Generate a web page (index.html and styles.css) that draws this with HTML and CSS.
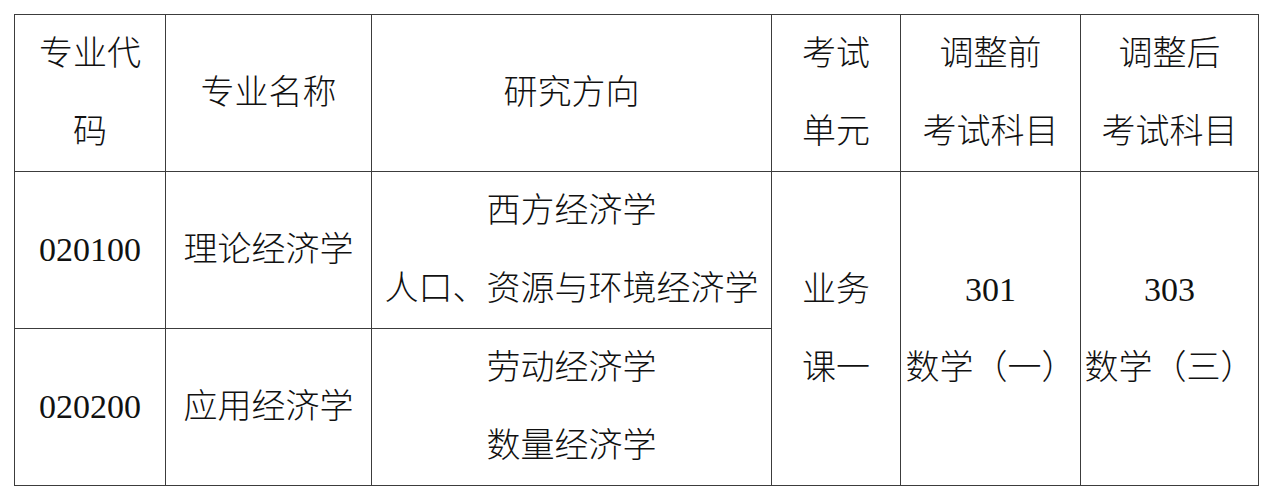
FILE: index.html
```html
<!DOCTYPE html>
<html lang="zh-CN">
<head>
<meta charset="utf-8">
<link rel="stylesheet" href="styles.css">
</head>
<body>
<table class="grid">
  <colgroup>
    <col class="c1"><col class="c2"><col class="c3"><col class="c4"><col class="c5"><col class="c6">
  </colgroup>
  <tr>
    <td>专业代<br>码</td>
    <td>专业名称</td>
    <td>研究方向</td>
    <td>考试<br>单元</td>
    <td>调整前<br>考试科目</td>
    <td>调整后<br>考试科目</td>
  </tr>
  <tr>
    <td>020100</td>
    <td>理论经济学</td>
    <td>西方经济学<br>人口、资源与环境经济学</td>
    <td rowspan="2">业务<br>课一</td>
    <td rowspan="2">301<br>数学（一）</td>
    <td rowspan="2">303<br>数学（三）</td>
  </tr>
  <tr>
    <td>020200</td>
    <td>应用经济学</td>
    <td>劳动经济学<br>数量经济学</td>
  </tr>
</table>
</body>
</html>
```
FILE: styles.css
```css
html, body {
  margin: 0;
  padding: 0;
  background: #ffffff;
}
body {
  padding: 14px 0 0 14px;
}
.grid {
  border-collapse: collapse;
  table-layout: fixed;
  width: 1244px;
  font-family: "Liberation Serif", "Noto Sans CJK SC", serif;
  font-size: 34px;
  font-weight: 300;
  color: #111111;
}
.c1 { width: 151px; }
.c2 { width: 206px; }
.c3 { width: 400px; }
.c4 { width: 129px; }
.c5 { width: 180px; }
.c6 { width: 178px; }
.grid td {
  border: 1.5px solid #3c3c3c;
  text-align: center;
  vertical-align: middle;
  padding: 0;
  height: 155px;
  line-height: 78px;
  white-space: nowrap;
}
```
